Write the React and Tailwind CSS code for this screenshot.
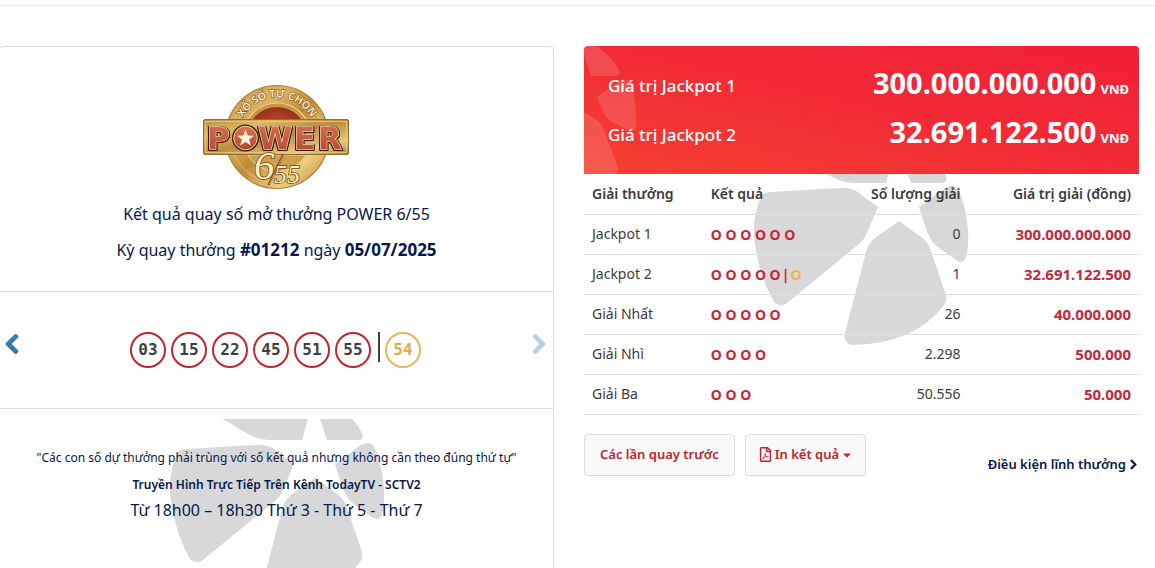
import React from "react";
import { FaChevronLeft, FaChevronRight, FaRegFilePdf, FaCaretDown } from "react-icons/fa";

const balls = ["03", "15", "22", "45", "51", "55"];

const prizes = [
  { name: "Jackpot 1", rings: 6, count: "0", value: "300.000.000.000" },
  { name: "Jackpot 2", rings: 5, bonus: true, count: "1", value: "32.691.122.500" },
  { name: "Giải Nhất", rings: 5, count: "26", value: "40.000.000" },
  { name: "Giải Nhì", rings: 4, count: "2.298", value: "500.000" },
  { name: "Giải Ba", rings: 3, count: "50.556", value: "50.000" },
];

function Petals({ className }) {
  return (
    <svg className={className} width="216" height="184" viewBox="0 0 216 184" fill="#d8d8da" aria-hidden="true">
      <path d="M53 0 C70 8 82 21 102 21 L133 21 L139 0 Z" />
      <path d="M151 0 L183 0 Q187 4 192 12 Q197 21 188 21 L158 21 Z" />
      <path d="M8 35 Q10 30 18 30 L88 26 Q102 25 111 35 L125 45 L114 71 Q111 78 106 82 L34 141 Q27 146 21 140 Q8 118 3 88 Q-3 60 8 35 Z" />
      <path d="M166 45 L192 26 Q201 21 205 28 Q212 40 215 68 Q216 80 214 91 Q212 104 203 98 L186 86 Q178 81 173 67 Z" />
      <path d="M146 59 L168 75 Q174 79 177 86 L193 133 Q194 139 191 143 Q162 182 99 183 Q90 181 92 171 L113 90 Q116 79 126 73 Z" />
    </svg>
  );
}

function Logo() {
  return (
    <svg className="mx-auto block" width="150" height="108" viewBox="12 12 150 108" role="img" aria-label="Power 6/55">
      <defs>
        <linearGradient id="gold" x1="0" y1="0" x2="1" y2="1">
          <stop offset="0" stopColor="#c69a48" />
          <stop offset="0.3" stopColor="#dab463" />
          <stop offset="0.5" stopColor="#c18b35" />
          <stop offset="0.75" stopColor="#edcf80" />
          <stop offset="1" stopColor="#b97d31" />
        </linearGradient>
        <linearGradient id="bar" x1="0" y1="0" x2="1" y2="1">
          <stop offset="0" stopColor="#b98c40" />
          <stop offset="0.25" stopColor="#deb865" />
          <stop offset="0.5" stopColor="#bc8c3c" />
          <stop offset="0.8" stopColor="#e8ca7c" />
          <stop offset="1" stopColor="#a87c34" />
        </linearGradient>
        <linearGradient id="letter" x1="0" y1="0" x2="0" y2="1">
          <stop offset="0" stopColor="#dc7450" />
          <stop offset="1" stopColor="#b04530" />
        </linearGradient>
        <radialGradient id="core">
          <stop offset="0" stopColor="#d9582c" />
          <stop offset="1" stopColor="#98331a" />
        </radialGradient>
        <path id="arc" d="M52 48 A39 39 0 0 1 122 48" />
      </defs>
      <circle cx="87" cy="66" r="51.5" fill="url(#gold)" stroke="#b77a35" strokeWidth="1.2" />
      <circle cx="87" cy="66" r="46" fill="none" stroke="#e6c67c" strokeWidth="0.8" />
      <circle cx="87" cy="66" r="34" fill="#c8964a" stroke="#f0d389" strokeWidth="1.2" />
      <circle cx="87" cy="66" r="30" fill="url(#core)" />
      <path d="M58 84 A34 34 0 0 0 116 84 Z" fill="#cf9f4e" stroke="#f4dc99" strokeWidth="0.8" />
      <g fontFamily="Noto Sans, sans-serif" fontWeight="600" fontSize="10.5" textAnchor="middle" fill="#fff2cf" stroke="#805020" strokeWidth="1.2" paintOrder="stroke">
        <text><textPath href="#arc" startOffset="50%">XỔ SỐ TỰ CHỌN</textPath></text>
      </g>
      <rect x="13.5" y="48.5" width="145" height="35" rx="1.5" fill="url(#bar)" stroke="#9a6d2f" />
      <rect x="15.5" y="50.5" width="141" height="31" fill="none" stroke="#e6c880" strokeWidth="0.8" />
      <g
        className="[filter:drop-shadow(1px_0_0_#3c1a10)_drop-shadow(-1px_0_0_#3c1a10)_drop-shadow(0_1px_0_#3c1a10)]"
        fontFamily="DejaVu Sans, sans-serif"
        fontWeight="700"
        fontSize="31"
        fill="url(#letter)"
        stroke="#f6dcb4"
        strokeWidth="1.4"
        paintOrder="stroke"
      >
        <text x="17" y="78">P</text>
        <text x="68" y="78">W</text>
        <text x="104" y="78">E</text>
        <text x="128" y="78">R</text>
      </g>
      <circle cx="55.500" cy="67" r="13.500" fill="#3c1a10" />
      <circle cx="55.500" cy="67" r="11.800" fill="url(#letter)" stroke="#f3d9a5" strokeWidth="1" />
      <path d="M55.500 58.500 L57.800 64.600 L64 64.700 L59.100 68.600 L60.900 74.600 L55.500 71 L50.100 74.600 L51.900 68.600 L47 64.700 L53.200 64.600 Z" fill="#fff2d2" />
      <path d="M78.500 114 L93 84" stroke="#6d4318" strokeWidth="2" />
      <path d="M79 113.500 L93 84.500" stroke="#f4dc99" strokeWidth="0.6" />
      <g fontFamily="Liberation Serif, serif" fontStyle="italic" fill="#fff0c4" stroke="#6d4318" strokeWidth="1.6" paintOrder="stroke">
        <text x="64" y="108" fontSize="41">6</text>
        <text x="84" y="112" fontSize="26">55</text>
      </g>
    </svg>
  );
}

function Ball({ value, bonus }) {
  return (
    <span
      className={
        bonus
          ? "flex size-9 items-center justify-center rounded-full border-2 border-[#e8b659] text-[#e5aa45]"
          : "flex size-9 items-center justify-center rounded-full border-2 border-[#c4242b] text-[#3c4043]"
      }
    >
      {value}
    </span>
  );
}

function JackpotLine({ label, amount }) {
  return (
    <div className="flex h-[49px] items-center justify-between">
      <span className="text-[17px] font-medium">{label}</span>
      <span className="text-[29px] font-bold leading-10">
        {amount}
        <span className="ml-1 text-[13px]">VNĐ</span>
      </span>
    </div>
  );
}

function DrawCard() {
  return (
    <section className="flex flex-col rounded-t border border-[#dcdcdc] text-center text-[#07184a]">
      <div className="flex h-[245px] flex-col border-b border-[#dcdcdc] pt-9">
        <Logo />
        <p className="mt-[5px] text-[16px] leading-9">Kết quả quay số mở thưởng POWER 6/55</p>
        <p className="text-[16px] leading-9">
          Kỳ quay thưởng <b className="text-[17px]">#01212</b> ngày <b className="text-[17px]">05/07/2025</b>
        </p>
      </div>
      <div className="flex h-[117px] items-center justify-between border-b border-[#dcdcdc] pl-1 pr-1.5">
        <button type="button" aria-label="Kỳ trước" className="-mt-3 text-[22px] text-[#3a7ab0]">
          <FaChevronLeft className="w-4" stroke="currentColor" strokeWidth="32" />
        </button>
        <div className="flex items-center gap-[5px] font-['DejaVu_Sans_Mono',monospace] text-[16px] font-bold">
          {balls.map((b) => (
            <Ball key={b} value={b} />
          ))}
          <span className="ml-0.5 h-[30px] w-0.5 self-start bg-[#40413c]" />
          <Ball value="54" bonus />
        </div>
        <button type="button" aria-label="Kỳ sau" className="-mt-3 text-[22px] text-[#b9d1e2]">
          <FaChevronRight className="w-4" stroke="currentColor" strokeWidth="32" />
        </button>
      </div>
      <div className="relative mt-2.5 grow overflow-hidden pt-6">
        <Petals className="absolute left-[169px] top-0" />
        <div className="relative">
          <p className="text-[12px] leading-[30px]">
            "Các con số dự thưởng phải trùng với số kết quả nhưng không cần theo đúng thứ tự"
          </p>
          <p className="text-[12px] font-semibold leading-6">Truyền Hình Trực Tiếp Trên Kênh TodayTV - SCTV2</p>
          <p className="text-[16px] leading-[26px]">Từ 18h00 – 18h30 Thứ 3 - Thứ 5 - Thứ 7</p>
        </div>
      </div>
    </section>
  );
}

function Banner() {
  return (
    <div className="relative h-32 overflow-hidden rounded-t bg-linear-to-tr from-[#f4402f] via-[#f22b36] to-[#f01f38] pl-6 pr-2.5 pt-[15px] text-white">
      <svg className="absolute left-0 top-0" width="56" height="128" viewBox="0 0 56 128" fill="#fff" fillOpacity="0.14" aria-hidden="true">
        <path d="M0 0 L12 0 Q24 6 34 22 Q38 30 31 30 L7 30 L0 9 Z" />
        <path d="M13 51 L37 34 Q45 32 48 40 Q53 58 52 79 Q51 88 42 83 L30 77 Q23 74 20 67 Z" />
        <path d="M0 66 L14 75 Q18 78 20 84 L34 122 L33 128 L0 128 Z" />
      </svg>
      <div className="relative">
        <JackpotLine label="Giá trị Jackpot 1" amount="300.000.000.000" />
        <JackpotLine label="Giá trị Jackpot 2" amount="32.691.122.500" />
      </div>
    </div>
  );
}

function PrizeTable() {
  return (
    <div className="relative overflow-hidden">
      <Petals className="absolute -top-3 left-[169px]" />
      <table className="relative w-full table-fixed border-collapse text-[14px] text-[#3b3b3b]">
        <colgroup>
          <col className="w-[21.4%]" />
          <col className="w-[25.6%]" />
          <col className="w-[22.3%]" />
          <col className="w-[30.7%]" />
        </colgroup>
        <thead>
          <tr className="h-10 border-b border-[#dfdfdf]">
            <th className="px-2 text-left font-semibold">Giải thưởng</th>
            <th className="px-2 text-left font-semibold">Kết quả</th>
            <th className="whitespace-nowrap px-2 text-right font-semibold">Số lượng giải</th>
            <th className="px-2 text-right font-semibold">Giá trị giải (đồng)</th>
          </tr>
        </thead>
        <tbody>
          {prizes.map((p) => (
            <tr key={p.name} className="h-10 border-b border-[#dfdfdf]">
              <td className="px-2 pb-0.5">{p.name}</td>
              <td className="px-2 font-bold text-[#ca2436]">
                {Array(p.rings).fill("O").join(" ")}
                {p.bonus && (
                  <>
                    <span className="mx-px">|</span>
                    <span className="text-[#eeb050]">O</span>
                  </>
                )}
              </td>
              <td className="px-2 pb-0.5 text-right">{p.count}</td>
              <td className="px-2 text-right text-[15px] font-bold text-[#c4283a]">{p.value}</td>
            </tr>
          ))}
        </tbody>
      </table>
    </div>
  );
}

export default function App() {
  return (
    <div className="h-screen overflow-hidden bg-white pt-[5px] font-['Noto_Sans',sans-serif]">
      <main className="-ml-px grid h-[calc(100%+8px)] grid-cols-2 gap-[30px] border-t border-[#ececec] pr-4 pt-10">
        <DrawCard />
        <section>
          <Banner />
          <PrizeTable />
          <div className="mt-[19px] flex items-center gap-2.5 text-[13px] font-semibold text-[#c0222e]">
            <button type="button" className="h-[42px] rounded border border-[#dcdcdc] bg-[#f9f9f9] px-[15px]">
              Các lần quay trước
            </button>
            <button type="button" className="flex h-[42px] items-center gap-0.5 rounded border border-[#dcdcdc] bg-[#f9f9f9] px-3 shadow-xs">
              <FaRegFilePdf className="text-[15px]" />
              In kết quả
              <FaCaretDown className="text-[12px]" />
            </button>
            <a href="#dieu-kien" className="ml-auto mt-5 flex items-center gap-0.5 text-[#07184a]">
              Điều kiện lĩnh thưởng
              <FaChevronRight className="text-[11px]" stroke="currentColor" strokeWidth="32" />
            </a>
          </div>
        </section>
      </main>
    </div>
  );
}
